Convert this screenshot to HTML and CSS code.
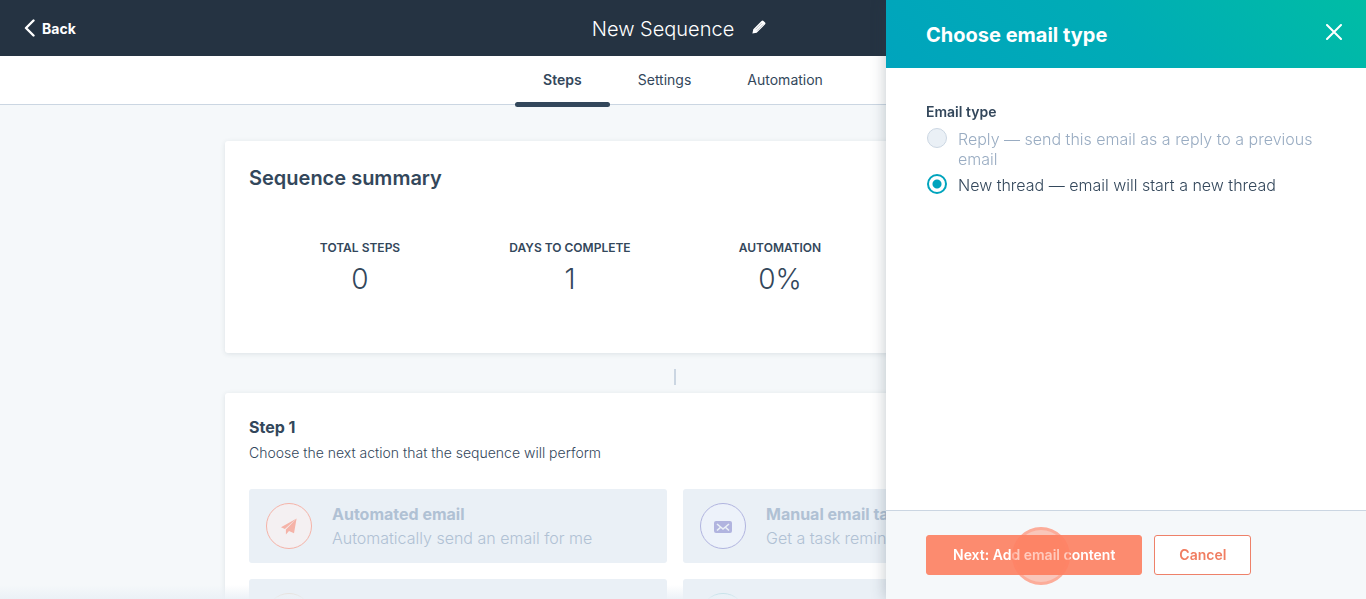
FILE: index.html
```html
<!DOCTYPE html>
<html lang="en">
<head>
<meta charset="utf-8">
<meta name="viewport" content="width=device-width, initial-scale=1">
<title>New Sequence</title>
<link rel="stylesheet" href="styles.css">
</head>
<body>
<div class="app">
  <header class="topbar">
    <a class="back" href="#">
      <svg class="back-icon" viewBox="0 0 12 18" aria-hidden="true"><path d="M9.5 1.5 2 9l7.500 7.500"/></svg>
      Back
    </a>
    <div class="title-group">
      <h1 class="title">New Sequence</h1>
      <button class="edit" type="button" aria-label="Edit name">
        <svg viewBox="0 0 14 14" aria-hidden="true"><path class="pencil" d="M.4 13.600 1.300 9.300 9.500 1.100Q10.500.1 11.500.9L13.100 2.500Q13.900 3.500 12.900 4.500L4.700 12.700Z"/><path class="pencil-line" d="M3.500 9.300 9.700 3.100M5 10.700 11.200 4.500"/></svg>
      </button>
    </div>
  </header>
  <nav class="tabs">
    <a class="tab tab-active" href="#" aria-current="page">Steps</a>
    <a class="tab" href="#">Settings</a>
    <a class="tab" href="#">Automation</a>
  </nav>
  <main class="content">
    <section class="card summary">
      <h2 class="summary-title">Sequence summary</h2>
      <dl class="stats">
        <div class="stat"><dt>TOTAL STEPS</dt><dd>0</dd></div>
        <div class="stat"><dt>DAYS TO COMPLETE</dt><dd>1</dd></div>
        <div class="stat"><dt>AUTOMATION</dt><dd>0%</dd></div>
        <div class="stat"></div>
      </dl>
    </section>
    <div class="connector"></div>
    <section class="card step">
      <h3 class="step-title">Step 1</h3>
      <p class="step-text">Choose the next action that the sequence will perform</p>
      <div class="actions">
        <button class="action" type="button" disabled>
          <span class="badge badge-orange">
            <svg viewBox="0 0 16 17" aria-hidden="true"><path d="M15.600.4 0 9.200 3.900 11ZM15.600.4 4.900 11.500V16.600L8 12.900 13 15.200Z"/></svg>
          </span>
          <span class="action-text"><strong>Automated email</strong><span>Automatically send an email for me</span></span>
        </button>
        <button class="action" type="button" disabled>
          <span class="badge badge-purple">
            <svg class="mail" viewBox="0 0 18 12" aria-hidden="true"><rect width="18" height="12" rx="2"/><path d="M3 3 9 8 15 3M3 9.500 6.200 6.700M15 9.500 11.800 6.700"/></svg>
          </span>
          <span class="action-text"><strong>Manual email task</strong><span>Get a task reminder</span></span>
        </button>
        <button class="action" type="button" disabled aria-label="Action"><span class="badge badge-yellow"></span></button>
        <button class="action" type="button" disabled aria-label="Action"><span class="badge badge-teal"></span></button>
      </div>
    </section>
  </main>
  <div class="fade"></div>
</div>

<aside class="panel" aria-label="Choose email type">
  <header class="panel-head">
    <h2 class="panel-title">Choose email type</h2>
    <button class="close" type="button" aria-label="Close">
      <svg viewBox="0 0 16 16" aria-hidden="true"><path d="M1 1 15 15M15 1 1 15"/></svg>
    </button>
  </header>
  <form class="panel-body">
    <fieldset class="choices">
      <legend>Email type</legend>
      <label class="choice choice-off"><input type="radio" name="type" disabled><span>Reply — send this email as a reply to a previous email</span></label>
      <label class="choice"><input type="radio" name="type" checked><span>New thread — email will start a new thread</span></label>
    </fieldset>
  </form>
  <footer class="panel-foot">
    <button class="btn btn-primary" type="button">Next: Add email content<span class="ripple"></span></button>
    <button class="btn btn-secondary" type="button">Cancel</button>
  </footer>
</aside>
</body>
</html>
```
FILE: styles.css
```css
* { box-sizing: border-box; }

body, h1, h2, h3, p, dl, dd { margin: 0; }

body {
  font-family: Inter, "Open Sans", sans-serif;
  font-size: 16px;
  font-weight: 300;
  color: #33475b;
  background: #f5f8fa;
  overflow: hidden;
}

button {
  font: inherit;
  color: inherit;
  padding: 0;
  border: 0;
  background: none;
}

a { color: inherit; text-decoration: none; }

svg { display: block; }

.app {
  position: relative;
  display: flex;
  flex-direction: column;
  height: 100vh;
  overflow: hidden;
}

.topbar {
  flex: none;
  display: grid;
  grid-template-columns: 1fr auto 1fr;
  align-items: center;
  height: 56px;
  padding: 0 24px;
  color: #fff;
  background: #253342;
}

.back {
  display: flex;
  align-items: center;
  gap: 6px;
  font-size: 14px;
  font-weight: 700;
}

.back-icon {
  width: 12px;
  height: 18px;
  fill: none;
  stroke: #fff;
  stroke-width: 2.4;
  stroke-linecap: round;
  stroke-linejoin: round;
}

.title-group {
  display: flex;
  align-items: center;
  gap: 18px;
  padding-right: 8px;
}

.title {
  font-size: 20px;
  font-weight: 300;
  line-height: 24px;
  padding-top: 2px;
}

.edit { padding-bottom: 2px; }
.edit svg { width: 14px; height: 14px; }
.pencil { fill: #fff; }
.pencil-line { fill: none; stroke: #8d959d; stroke-width: 0.6; }

.tabs {
  flex: none;
  display: flex;
  justify-content: center;
  height: 49px;
  background: #fff;
  border-bottom: 1px solid #cbd6e2;
}

.tab {
  position: relative;
  padding: 0 28px;
  font-size: 14px;
  font-weight: 400;
  line-height: 48px;
}

.tab-active { font-weight: 600; }

.tab-active::after {
  content: "";
  position: absolute;
  left: 0;
  right: 0;
  bottom: -3px;
  height: 5px;
  border-radius: 3px;
  background: #33475b;
}

.content {
  flex: 1;
  min-height: 0;
  overflow: hidden;
  padding: 36px 16px 0 0;
}

.card {
  width: 100%;
  max-width: 900px;
  margin: 0 auto;
  padding: 24px;
  background: #fff;
  border-radius: 3px;
  box-shadow: 0 1px 5px rgba(45, 62, 80, 0.12);
}

.summary { padding-bottom: 56px; }

.summary-title {
  font-size: 20px;
  font-weight: 600;
  line-height: 26px;
}

.stats {
  display: grid;
  grid-template-columns: repeat(4, 1fr);
  margin: 48px 6px 0;
  text-align: center;
}

.stat dt {
  font-size: 12px;
  font-weight: 600;
  line-height: 18px;
}

.stat dd {
  font-size: 28px;
  line-height: 36px;
  padding-top: 4px;
}

.connector {
  width: 2px;
  height: 16px;
  margin: 16px auto 8px;
  background: #cbd6e2;
}

.step-title {
  font-size: 16px;
  font-weight: 700;
  line-height: 20px;
}

.step-text {
  padding-top: 4px;
  font-size: 14px;
  line-height: 24px;
}

.actions {
  display: grid;
  grid-template-columns: 1fr 1fr;
  gap: 16px;
  margin-top: 24px;
}

.action {
  display: flex;
  align-items: center;
  gap: 20px;
  height: 74px;
  padding: 0 17px;
  overflow: hidden;
  text-align: left;
  white-space: nowrap;
  color: #b0c1d4;
  background: #eaf0f6;
  border-radius: 3px;
}

.badge {
  flex: none;
  display: grid;
  place-items: center;
  width: 46px;
  height: 46px;
  border: 1px solid;
  border-radius: 50%;
}

.badge svg { width: 16px; height: 17px; fill: currentColor; }
.badge .mail { width: 18px; height: 12px; margin-top: 2px; }
.badge .mail path { fill: none; stroke: #eaf0f6; stroke-width: 1.6; }
.badge-orange { color: #f5b3a8; background: #f4f0f2; }
.badge-purple { color: #b1b4df; background: #edf2fa; }
.badge-yellow { color: #e2d3c3; background: #eff2f5; }
.badge-teal { color: #9fd2db; background: #ebf3f8; }

.action-text {
  display: flex;
  flex-direction: column;
  line-height: 24px;
}

.action-text strong { font-weight: 700; }

.fade {
  position: absolute;
  left: 0;
  right: 0;
  bottom: 0;
  height: 14px;
  background: linear-gradient(rgba(234, 240, 246, 0), rgba(234, 240, 246, 0.9));
}

.panel {
  position: fixed;
  top: 0;
  right: 0;
  bottom: 0;
  display: flex;
  flex-direction: column;
  width: 480px;
  max-width: 100%;
  background: #fff;
  box-shadow: 0 0 14px rgba(45, 62, 80, 0.3);
}

.panel-head {
  display: flex;
  align-items: center;
  justify-content: space-between;
  height: 68px;
  padding: 0 24px 0 40px;
  color: #fff;
  background: linear-gradient(45deg, #00a4bd 0%, #00acb6 50%, #00bda5 100%);
}

.panel-title {
  font-size: 20px;
  font-weight: 700;
  line-height: 24px;
  padding-top: 2px;
}

.close { padding-bottom: 4px; }

.close svg {
  width: 16px;
  height: 16px;
  stroke: #fff;
  stroke-width: 2;
  stroke-linecap: round;
}

.panel-body {
  flex: 1;
  padding: 32px 40px;
}

.choices {
  display: flex;
  flex-direction: column;
  gap: 6px;
  margin: 0;
  padding: 0;
  border: 0;
}

.choices legend {
  padding: 0 0 5px;
  font-size: 14px;
  font-weight: 600;
  line-height: 24px;
}

.choice {
  display: flex;
  align-items: flex-start;
  gap: 11px;
  line-height: 20px;
}

.choice-off { color: #99acc2; }

.choice input {
  appearance: none;
  flex: none;
  width: 20px;
  height: 20px;
  margin: -1px 0 0 1px;
  border: 2px solid #00a4bd;
  border-radius: 50%;
  background: #fff;
}

.choice input:checked { background: radial-gradient(circle, #00a4bd 4px, #fff 5px); }

.choice input:disabled {
  border: 1px solid #cbd6e2;
  background: #eaf0f6;
}

.panel-foot {
  display: flex;
  gap: 12px;
  padding: 24px 40px;
  background: #f5f8fa;
  border-top: 1px solid #cbd6e2;
}

.btn {
  height: 40px;
  padding: 0 24px;
  font-size: 14px;
  font-weight: 600;
  line-height: 20px;
  white-space: nowrap;
  border: 1px solid #fc8b6f;
  border-radius: 3px;
}

.btn-primary {
  position: relative;
  padding: 0 26px;
  color: #fff;
  background: #fc8b6f;
}

.btn-secondary {
  color: #f07d61;
  background: #fff;
  border-color: #ee8169;
}

.ripple {
  position: absolute;
  top: -9px;
  left: 85px;
  width: 58px;
  height: 58px;
  border: 3px solid rgba(255, 133, 106, 0.4);
  border-radius: 50%;
  background: rgba(255, 122, 89, 0.4);
}
```
